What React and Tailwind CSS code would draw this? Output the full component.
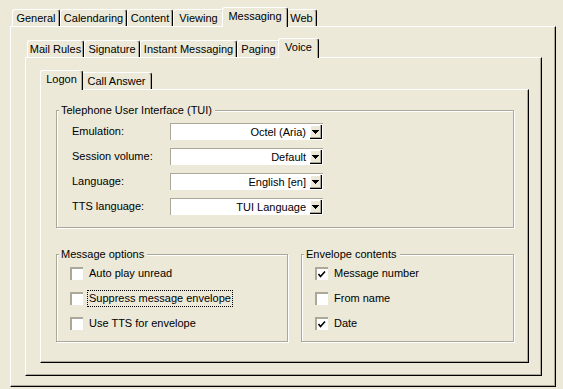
import clsx from "clsx";

const row1 = [
  { label: "General", w: "w-[48px]" },
  { label: "Calendaring", w: "w-[67px]" },
  { label: "Content", w: "w-[46px]" },
  { label: "Viewing", w: "w-[51px]" },
  { label: "Messaging", w: "w-[66px]", selected: true },
  { label: "Web", w: "w-[31px]" },
];

const row2 = [
  { label: "Mail Rules", w: "w-[57px]" },
  { label: "Signature", w: "w-[56px]" },
  { label: "Instant Messaging", w: "w-[97px]" },
  { label: "Paging", w: "w-[43px]" },
  { label: "Voice", w: "w-[41px]", selected: true },
];

const row3 = [
  { label: "Logon", w: "w-[43px]", selected: true },
  { label: "Call Answer", w: "w-[71px]" },
];

const tuiRows = [
  { label: "Emulation:", value: "Octel (Aria)" },
  { label: "Session volume:", value: "Default" },
  { label: "Language:", value: "English [en]" },
  { label: "TTS language:", value: "TUI Language" },
];

const Tab = ({ label, w, selected }) => (
  <div
    className={clsx(
      w,
      "flex justify-center whitespace-nowrap leading-[13px] pt-[2px] border-t border-l border-r border-white border-r-black rounded-t-[3px] shadow-[inset_-1px_0_0_#aca899]",
      selected ? "relative z-10 -mx-[2px] h-[20px] -mb-px bg-[#ECE9D8]" : "h-[17px]"
    )}
  >
    {label}
  </div>
);

const TabStrip = ({ tabs }) => (
  <div className="relative z-10 flex items-end h-[19px] pl-[2px]">
    {tabs.map((t) => (
      <Tab key={t.label} {...t} />
    ))}
  </div>
);

const panelCls =
  "border-t border-l border-r border-b border-white border-r-black border-b-black shadow-[inset_-1px_-1px_0_#aca899]";

const GroupBox = ({ title, className, children }) => (
  <div
    className={clsx(
      "relative border border-[#aca899] shadow-[1px_1px_0_#fff,inset_1px_1px_0_#fff]",
      className
    )}
  >
    <span className="absolute left-[2px] top-[-7px] pl-[2px] pr-[3px] leading-[13px] bg-[#ECE9D8] whitespace-nowrap">
      {title}
    </span>
    {children}
  </div>
);

const Combo = ({ value }) => (
  <div className="w-[153px] h-[17px] bg-white border-t border-l border-[#aca899] flex items-center justify-end">
    <span className="pr-[4px] leading-[13px] whitespace-nowrap">{value}</span>
    <div className="w-[12px] h-[14px] mr-[1px] bg-[#ECE9D8] border-r border-b border-black shadow-[inset_-1px_-1px_0_#aca899,inset_1px_1px_0_#fff] flex items-center justify-center">
      <svg width="7" height="4" viewBox="0 0 7 4" shapeRendering="crispEdges">
        <rect x="0" y="0" width="7" height="1" fill="#000" />
        <rect x="1" y="1" width="5" height="1" fill="#000" />
        <rect x="2" y="2" width="3" height="1" fill="#000" />
        <rect x="3" y="3" width="1" height="1" fill="#000" />
      </svg>
    </div>
  </div>
);

const Check = ({ label, checked, focused }) => (
  <div className="flex items-center h-[13px]">
    <div className="relative w-[13px] h-[13px] bg-white shadow-[inset_2px_2px_0_#aca899] shrink-0">
      {checked && (
        <svg className="absolute inset-0" width="13" height="13" viewBox="0 0 13 13">
          <path d="M3.5 7 L5.5 9.5 L10 4.5" fill="none" stroke="#000" strokeWidth="1.6" />
        </svg>
      )}
    </div>
    <span
      className={clsx(
        "ml-[4px] px-[1px] leading-[13px] whitespace-nowrap border",
        focused ? "border-dotted border-black py-[1px]" : "border-transparent"
      )}
    >
      {label}
    </span>
  </div>
);

export default function App() {
  return (
    <div className="w-[563px] h-[389px] overflow-hidden bg-[#ECE9D8] pt-[7px] pl-[10px] text-[11px] text-black font-['Liberation_Sans',Arial,sans-serif]">
      <TabStrip tabs={row1} />
      <div className={clsx(panelCls, "w-[546px] h-[361px] pt-[11px] pl-[14px]")}>
        <TabStrip tabs={row2} />
        <div className={clsx(panelCls, "w-[517px] h-[319px] pt-[12px] pl-[14px]")}>
          <TabStrip tabs={row3} />
          <div className={clsx(panelCls, "w-[489px] h-[274px] pt-[20px] pl-[15px]")}>
            <GroupBox title="Telephone User Interface (TUI)" className="w-[458px] h-[118px] pt-[12px] pl-[15px]">
              <div className="flex flex-col gap-[8px]">
                {tuiRows.map((r) => (
                  <div key={r.label} className="flex items-center h-[17px]">
                    <span className="w-[98px] leading-[13px]">{r.label}</span>
                    <Combo value={r.value} />
                  </div>
                ))}
              </div>
            </GroupBox>

            <div className="flex mt-[26px]">
              <GroupBox title="Message options" className="w-[232px] h-[88px] pt-[12px] pl-[13px]">
                <div className="flex flex-col gap-[12px]">
                  <Check label="Auto play unread" />
                  <Check label="Suppress message envelope" focused />
                  <Check label="Use TTS for envelope" />
                </div>
              </GroupBox>
              <GroupBox title="Envelope contents" className="ml-[13px] w-[213px] h-[88px] pt-[12px] pl-[13px]">
                <div className="flex flex-col gap-[12px]">
                  <Check label="Message number" checked />
                  <Check label="From name" />
                  <Check label="Date" checked />
                </div>
              </GroupBox>
            </div>
          </div>
        </div>
      </div>
    </div>
  );
}
